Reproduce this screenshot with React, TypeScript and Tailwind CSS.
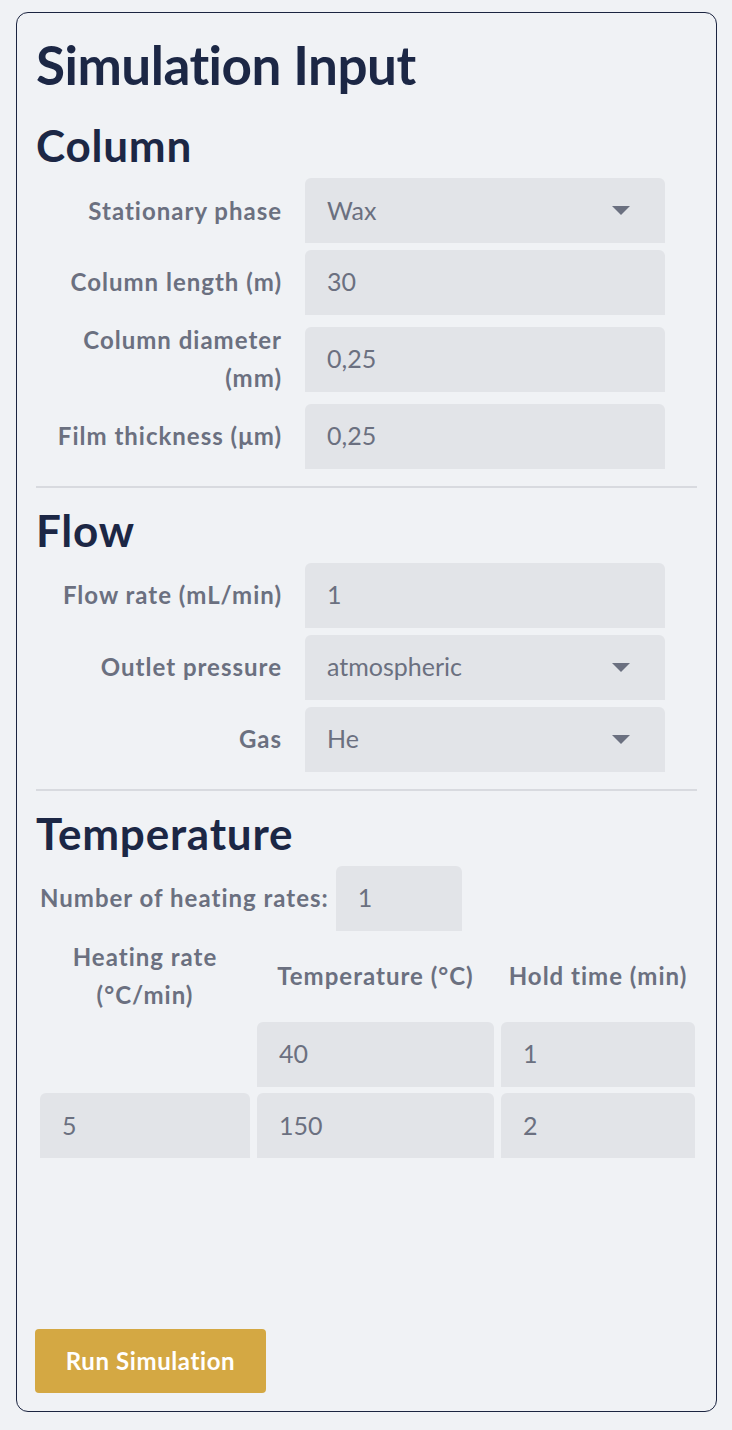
import type { ReactNode } from 'react'

const font = { fontFamily: 'Lato, "Noto Sans", sans-serif' }

function Caret() {
  return (
    <svg width="18" height="9" viewBox="0 0 18 9" className="shrink-0">
      <polygon points="0,0 18,0 9,9" fill="#6b7080" />
    </svg>
  )
}

function Field({ value, select = false }: { value: string; select?: boolean }) {
  return (
    <div className="flex h-[65px] items-center justify-between rounded-t-[6px] bg-[#e2e4e8] pl-[22px] pr-[35px] text-[25px] text-[#6b7080]">
      <span>{value}</span>
      {select && <Caret />}
    </div>
  )
}

function Row({ label, children }: { label: ReactNode; children: ReactNode }) {
  return (
    <div className="grid grid-cols-[246px_360px] items-center gap-x-[23px]">
      <div className="text-right text-[24px] font-bold leading-[38px] tracking-[1px] text-[#6b7080]">{label}</div>
      {children}
    </div>
  )
}

function Heading({ children }: { children: ReactNode }) {
  return <h2 className="text-[44px] font-bold leading-[44px] tracking-[0.8px] text-[#1c2745]">{children}</h2>
}

function Divider() {
  return <div className="h-[2px] bg-[#d8dadf]" />
}

export default function App() {
  return (
    <div className="min-h-[1430px] bg-[#f0f2f5] pt-[12px]" style={font}>
      <div className="ml-[16px] flex h-[1400px] w-[701px] flex-col rounded-[12px] border border-[#1b2440] px-[19px] pb-[18px] pt-[25px]">
        <h1 className="text-[53px] font-bold leading-[53px] tracking-[-0.5px] text-[#1c2745]">Simulation Input</h1>

        <div className="mt-[32px]">
          <Heading>Column</Heading>
        </div>
        <div className="mt-[11px] flex flex-col gap-[6.5px]">
          <Row label="Stationary phase">
            <Field value="Wax" select />
          </Row>
          <Row label="Column length (m)">
            <Field value="30" />
          </Row>
          <Row label={<div>Column diameter<br />(mm)</div>}>
            <Field value="0,25" />
          </Row>
          <Row label="Film thickness (μm)">
            <Field value="0,25" />
          </Row>
        </div>

        <div className="mb-[20px] mt-[17px]">
          <Divider />
        </div>
        <Heading>Flow</Heading>
        <div className="mt-[11px] flex flex-col gap-[7px]">
          <Row label="Flow rate (mL/min)">
            <Field value="1" />
          </Row>
          <Row label="Outlet pressure">
            <Field value="atmospheric" select />
          </Row>
          <Row label="Gas">
            <Field value="He" select />
          </Row>
        </div>

        <div className="mb-[20px] mt-[17px]">
          <Divider />
        </div>
        <Heading>Temperature</Heading>
        <div className="ml-[4px] mt-[11px] flex flex-col gap-[6.5px]">
          <div className="flex items-center gap-[7px]">
            <span className="text-[24px] font-bold tracking-[1px] text-[#6b7080]">Number of heating rates:</span>
            <div className="w-[126px]">
              <Field value="1" />
            </div>
          </div>
          <div className="grid grid-cols-[210px_237px_194px] items-center gap-x-[7px] gap-y-[6.5px]">
            <div className="py-[1px] text-center text-[24px] font-bold leading-[38px] tracking-[1px] text-[#6b7080]">
              Heating rate<br />(°C/min)
            </div>
            <div className="text-center text-[24px] font-bold leading-[38px] tracking-[1px] text-[#6b7080]">Temperature (°C)</div>
            <div className="text-center text-[24px] font-bold leading-[38px] tracking-[1px] text-[#6b7080]">Hold time (min)</div>

            <div />
            <Field value="40" />
            <Field value="1" />

            <Field value="5" />
            <Field value="150" />
            <Field value="2" />
          </div>
        </div>

        <button className="-ml-px mt-auto h-[64px] w-[231px] rounded-[4px] bg-[#d4a843] text-[24px] font-bold tracking-[0.6px] text-white">
          Run Simulation
        </button>
      </div>
    </div>
  )
}
